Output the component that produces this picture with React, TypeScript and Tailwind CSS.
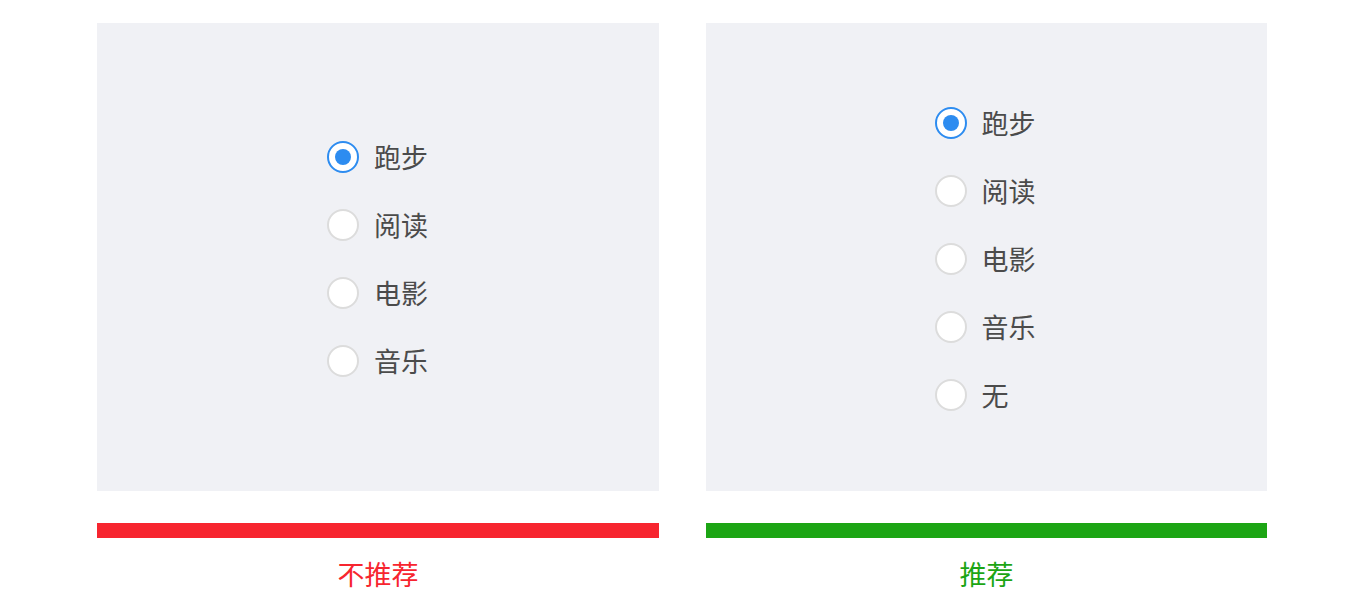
import { useState } from "react";

const font = { fontFamily: '"Noto Sans CJK SC", "Noto Sans", sans-serif' };

interface GroupProps {
  options: string[];
}

const RadioGroup = ({ options }: GroupProps) => {
  const [value, setValue] = useState(options[0]);
  return (
    <div className="flex flex-col">
      {options.map((opt) => {
        const active = value === opt;
        return (
          <label
            key={opt}
            onClick={() => setValue(opt)}
            className="flex h-[68px] cursor-pointer items-center gap-[15px]"
          >
            <span
              className={`flex h-[32px] w-[32px] items-center justify-center rounded-full border-2 bg-white ${
                active ? "border-[#2d8cf0]" : "border-[#dcdcdc]"
              }`}
            >
              {active && <span className="h-[16px] w-[16px] rounded-full bg-[#2d8cf0]" />}
            </span>
            <span className="text-[27px] leading-none text-[#4b4b4b]">{opt}</span>
          </label>
        );
      })}
    </div>
  );
};

interface ColumnProps {
  options: string[];
  label: string;
  good: boolean;
}

const Column = ({ options, label, good }: ColumnProps) => (
  <div className={`flex flex-col ${good ? "w-[561px]" : "w-[562px]"}`}>
    <div
      className={`flex h-[468px] items-center justify-center bg-[#f0f1f5] ${
        good ? "pt-[3px] pr-[3px]" : "pt-[3px] pr-[1px]"
      }`}
    >
      <RadioGroup options={options} />
    </div>
    <div className={`mt-[32px] h-[15px] ${good ? "bg-[#1ca514]" : "bg-[#f7252f]"}`} />
    <div
      className={`mt-[18px] text-center text-[27px] leading-[36px] ${
        good ? "text-[#1ca514]" : "text-[#f7252f]"
      }`}
    >
      {label}
    </div>
  </div>
);

export default function App() {
  return (
    <div className="h-[600px] w-full bg-white" style={font}>
      <div className="flex gap-[47px] pl-[97px] pt-[23px]">
        <Column options={["跑步", "阅读", "电影", "音乐"]} label="不推荐" good={false} />
        <Column options={["跑步", "阅读", "电影", "音乐", "无"]} label="推荐" good />
      </div>
    </div>
  );
}
